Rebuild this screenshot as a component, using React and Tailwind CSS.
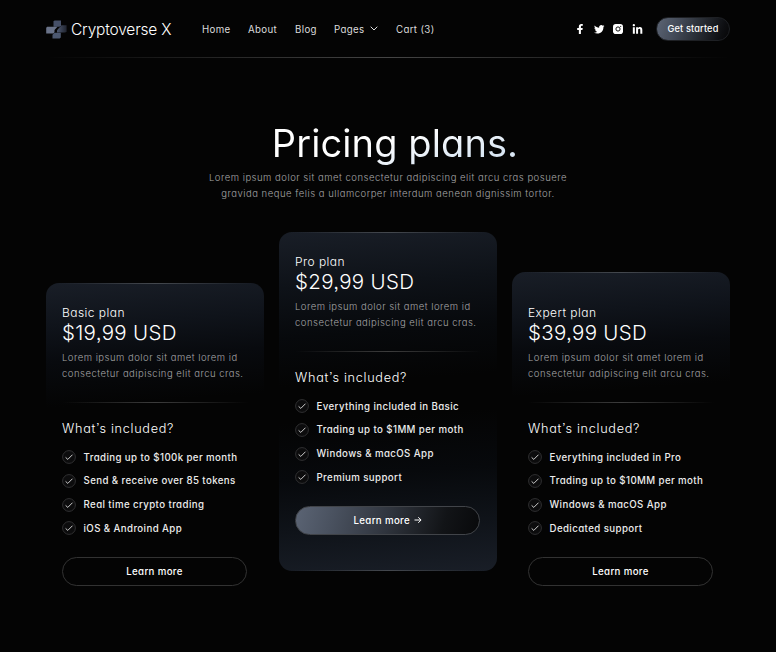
import { FaFacebookF, FaTwitter, FaLinkedinIn } from "react-icons/fa";

const plans = [
  {
    name: "Basic plan",
    price: "$19,99 USD",
    features: ["Trading up to $100k per month", "Send & receive over 85 tokens", "Real time crypto trading", "iOS & Androind App"],
    offset: "mt-[51px] h-[319px] pt-[21px]",
  },
  {
    name: "Pro plan",
    price: "$29,99 USD",
    features: ["Everything included in Basic", "Trading up to $1MM per moth", "Windows & macOS App", "Premium support"],
    offset: "h-[339px] pt-[21px]",
    featured: true,
  },
  {
    name: "Expert plan",
    price: "$39,99 USD",
    features: ["Everything included in Pro", "Trading up to $10MM per moth", "Windows & macOS App", "Dedicated support"],
    offset: "mt-[40px] h-[330px] pt-[32px]",
  },
];

function Logo() {
  return (
    <svg className="-mt-[2px]" width="21" height="19" viewBox="0 0 21 19">
      <defs>
        <linearGradient id="logo" x1="0" y1="0" x2="1" y2="0">
          <stop offset="0" stopColor="#4d5870" />
          <stop offset="1" stopColor="#20242f" />
        </linearGradient>
      </defs>
      <path d="M7.5 1.4 8.5 .4H15V5.2L13.5 6.8H7.5Z" fill="#465068" />
      <path d="M.2 7.8 1.2 6.8H11.5L8.5 10V12.2L7.4 13.4H.2Z" fill="#6a7389" />
      <path d="M20.6 5.2V11.2L19.4 12.4H11V10.2L15.5 5.2Z" fill="url(#logo)" />
      <path d="M6.5 14.8 8.6 12.7H14.8V17.4L13.6 18.6H6.5Z" fill="#4c5870" />
    </svg>
  );
}

function Check() {
  return (
    <svg width="14" height="14" viewBox="0 0 14 14" fill="none">
      <circle cx="7" cy="7" r="6.4" fill="#0c0c0d" stroke="#343436" strokeWidth="0.9" />
      <path d="M3.6 7.4 5.8 9.4 10.5 4.7" stroke="#d6d6d6" strokeWidth="0.95" />
    </svg>
  );
}

function PlanCard({ plan }) {
  return (
    <section
      className={`relative w-[218px] rounded-[13px] px-4 ${plan.offset} ${
        plan.featured
          ? "bg-[linear-gradient(176deg,#191e27_0%,#0e1218_16%,#07090c_30%,#040404_44%,#040404_54%,#07090c_70%,#0f1319_85%,#191e27_100%)]"
          : "bg-[linear-gradient(176deg,#191e27_0px,#0f131a_45px,#080a0e_80px,#040404_125px)]"
      }`}
    >
      <div className="absolute inset-x-3 top-0 h-px bg-[linear-gradient(90deg,transparent,#44484e_50%,transparent)]" />
      {plan.featured && (
        <div className="absolute inset-x-3 bottom-0 h-px bg-[linear-gradient(90deg,transparent,#44484e_50%,transparent)]" />
      )}
      <h2 className="h-[18px] text-[12px] leading-[18px] font-light tracking-[0.45px] text-white">{plan.name}</h2>
      <p className="h-[23px] text-[20.5px] leading-[22px] font-light tracking-[0.3px] text-white">{plan.price}</p>
      <p className="mt-[5px] text-[9.5px] leading-4 font-light tracking-[0.49px] text-[#a4a4a6]">
        Lorem ipsum dolor sit amet lorem id
        <br />
        consectetur adipiscing elit arcu cras.
      </p>
      <hr className="mt-[20px] h-px border-0 bg-[linear-gradient(90deg,transparent,#3c3c3c_50%,transparent)]" />
      <h3 className="mt-[17px] h-[18px] text-[12.7px] leading-[18px] font-light tracking-[0.7px] text-white">What’s included?</h3>
      <ul className="mt-[7.4px]">
        {plan.features.map((f) => (
          <li key={f} className="flex h-[23.7px] items-center gap-[7.5px] text-[9.7px] font-medium tracking-[0.4px] text-[#ececec]">
            <Check />
            <span className="pt-[1.5px]">{f}</span>
          </li>
        ))}
      </ul>
      <button
        className={`mt-[16.6px] flex h-[29px] w-[185px] items-center justify-center rounded-full border text-[9.7px] font-medium tracking-[0.35px] text-white ${
          plan.featured
            ? "border-[#414449] bg-[linear-gradient(105deg,#5b6474_0%,#4a5260_20%,#30353e_50%,#121417_80%,#08090b_100%)]"
            : "border-[#323232]"
        }`}
      >
        <span className="pt-[2px]">Learn more</span>
        {plan.featured && (
          <svg className="ml-[3.5px]" width="8" height="8" viewBox="0 0 8 8" fill="none" stroke="#fff" strokeWidth="1">
            <path d="M0.5 4H7M4.3 1.2 7.1 4 4.3 6.8" />
          </svg>
        )}
      </button>
    </section>
  );
}

export default function App() {
  return (
    <div className="h-[652px] w-[776px] overflow-hidden bg-[#040404] px-[46px] font-['Inter','Liberation_Sans',sans-serif] whitespace-nowrap text-white [font-feature-settings:'cv11','ss03']">
      <header className="relative flex h-[58px] items-center">
        <div className="flex w-[156px] items-center gap-[4px] pt-[2px]">
          <Logo />
          <span className="text-[15.5px] leading-5 font-light tracking-[-0.2px]">Cryptoverse X</span>
        </div>
        <nav className="flex pt-[2px] text-[9.7px] font-normal tracking-[0.35px] text-[#dcdcdc]">
          <a className="w-[46px]">Home</a>
          <a className="w-[47px]">About</a>
          <a className="w-[39px]">Blog</a>
          <a className="flex w-[62px] items-center gap-[5px]">
            Pages
            <svg className="-mt-[2px]" width="8" height="5" viewBox="0 0 8 5" fill="none" stroke="#dcdcdc" strokeWidth="1">
              <path d="M0.7 0.7 4 4 7.3 0.7" />
            </svg>
          </a>
          <a>Cart (3)</a>
        </nav>
        <div className="ml-auto flex items-center">
          <FaFacebookF className="mr-[9px] h-[10.5px] w-[10px]" />
          <FaTwitter className="mr-[8.5px] h-[10.5px] w-[10.5px]" />
          <svg className="mr-[9px]" width="10" height="10" viewBox="0 0 10 10">
            <rect width="10" height="10" rx="2.8" fill="#fff" />
            <circle cx="5" cy="5" r="2.1" fill="none" stroke="#111" strokeWidth="1" />
            <circle cx="7.7" cy="2.3" r="0.6" fill="#111" />
          </svg>
          <FaLinkedinIn className="mr-[13px] h-[11px] w-[11px]" />
          <button className="h-6 w-[74px] rounded-full border border-[#1e2024] bg-[linear-gradient(110deg,#5b6474_0%,#454c59_28%,#2b3038_55%,#0d0e11_88%,#060607_100%)] text-[9.2px] font-medium tracking-[0.15px]">
            Get started
          </button>
        </div>
        <div className="absolute inset-x-0 bottom-0 h-px bg-[linear-gradient(90deg,transparent,#454545_50%,transparent)]" />
      </header>
      <main>
        <div className="mt-[61px] flex flex-col items-center pl-[14px]">
          <h1 className="h-[51px] bg-[linear-gradient(165deg,#fff_45%,#d9e6f3_80%)] bg-clip-text text-[38px] leading-[49px] font-normal tracking-[0.1px] text-transparent">
            Pricing plans.
          </h1>
          <p className="-ml-[14px] text-center text-[9.5px] leading-4 font-light tracking-[0.5px] text-[#a4a4a6]">
            Lorem ipsum dolor sit amet consectetur adipiscing elit arcu cras posuere
            <br />
            gravida neque felis a ullamcorper interdum aenean dignissim tortor.
          </p>
        </div>
        <div className="mt-[30px] flex items-start justify-between">
          {plans.map((p) => (
            <PlanCard key={p.name} plan={p} />
          ))}
        </div>
      </main>
    </div>
  );
}
